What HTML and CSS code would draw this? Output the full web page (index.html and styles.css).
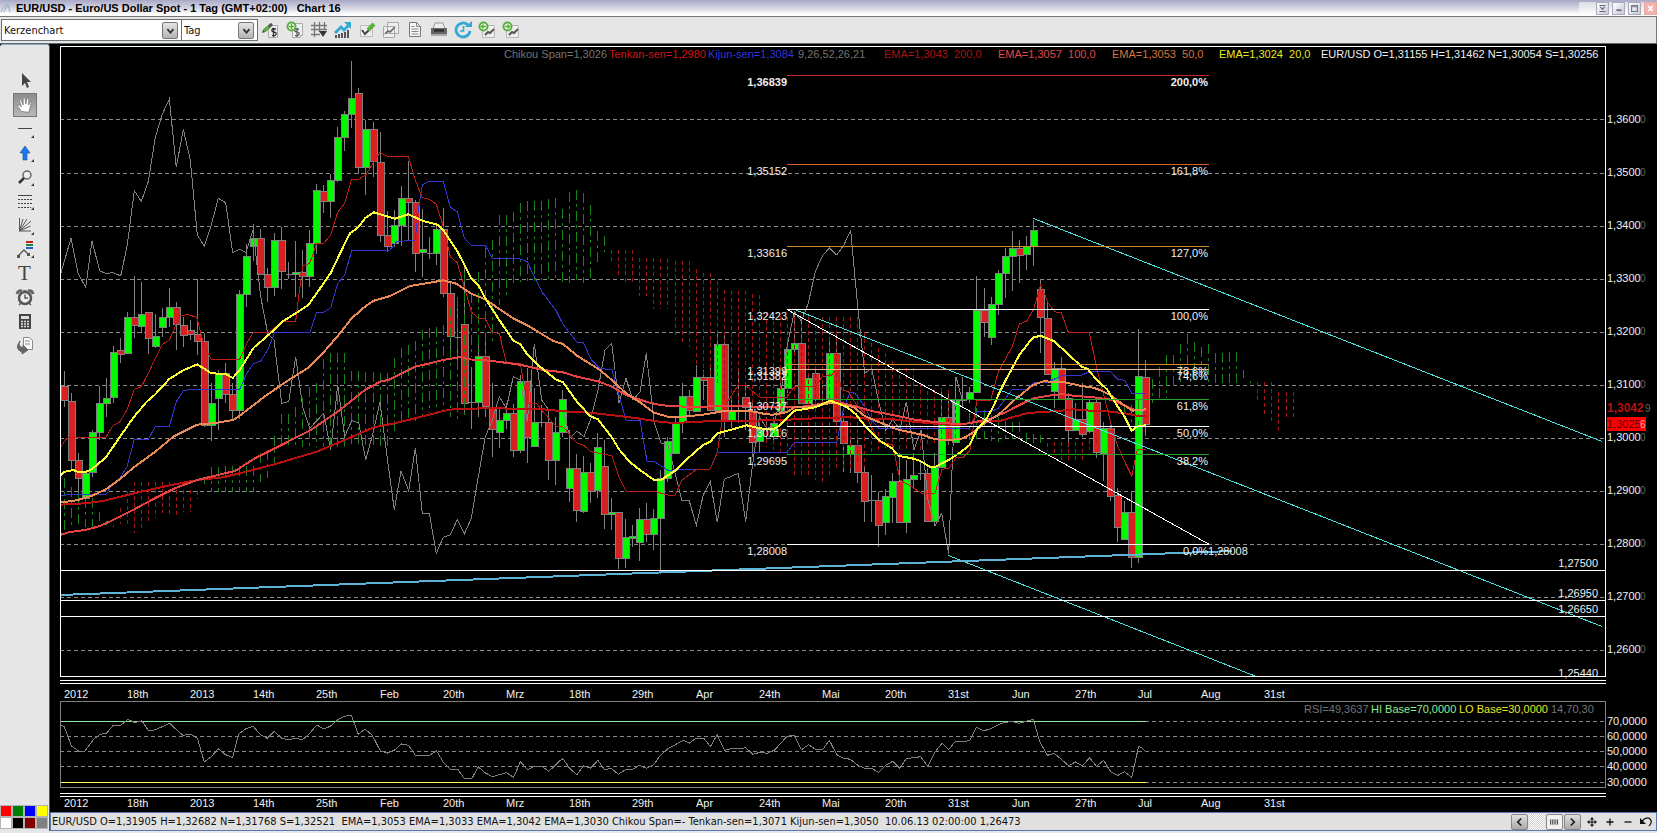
FILE: index.html
```html
<!DOCTYPE html>
<html lang="de">
<head>
<meta charset="utf-8">
<title>EUR/USD - Euro/US Dollar Spot</title>
<link rel="stylesheet" href="styles.css">
</head>
<body>
<header class="titlebar">
  <svg class="logo" viewBox="0 0 12 12"><path d="M1 10 Q3 4 8 2 M4 10 Q5 6 8 4 M8 3 L10 10" fill="none" stroke="#9fb4cc" stroke-width="1.2"/></svg>
  <h1>EUR/USD - Euro/US Dollar Spot - 1 Tag (GMT+02:00) &nbsp; Chart 16</h1>
  <div class="window-buttons">
    <button aria-label="Anheften"><svg viewBox="0 0 13 13"><path d="M3 3h7M3 10h7M4 4.500l2.500 3 2.500-3" fill="none" stroke="#667" stroke-width="1.300"/></svg></button>
    <button aria-label="Minimieren"><svg viewBox="0 0 13 13"><path d="M4 8.500h6" stroke="#667" stroke-width="2"/></svg></button>
    <button aria-label="Maximieren"><svg viewBox="0 0 13 13"><path d="M3 3h7v7H3zM3 4.500h7" fill="none" stroke="#778" stroke-width="1.300"/></svg></button>
    <button class="close" aria-label="Schließen"><svg viewBox="0 0 13 13"><path d="M4 3.500l5 6M9 3.500l-5 6" stroke="#fff" stroke-width="2"/></svg></button>
  </div>
</header>

<div class="toolbar">
  <div class="selects">
    <label class="pick pick-type"><select aria-label="Charttyp"><option>Kerzenchart</option></select><span class="drop"><svg viewBox="0 0 16 17"><path d="M5 7l3.500 4L12 7" fill="none" stroke="#333" stroke-width="2"/></svg></span></label>
    <label class="pick pick-time"><select aria-label="Intervall"><option>Tag</option></select><span class="drop"><svg viewBox="0 0 16 17"><path d="M5 7l3.500 4L12 7" fill="none" stroke="#333" stroke-width="2"/></svg></span></label>
  </div>
  <div class="tools">
    <button aria-label="Instrument bearbeiten"><svg viewBox="0 0 18 18"><path d="M6.500 4.500h9v12h-9z" fill="#eee" stroke="#aaa"/><path d="M14 8.500q-3-2-4 0t2 2.500 2 2.500-4 1M11.500 7v9" fill="none" stroke="#333" stroke-width="1.300"/><path d="M2 10L10 3" stroke="#555" stroke-width="3"/><path d="M2 10l5-4" stroke="#5ab03c" stroke-width="3"/><path d="M0 12l3-1-2-2z" fill="#444"/></svg></button>
    <button aria-label="Instrument hinzufügen"><svg viewBox="0 0 18 18"><path d="M6.500 2.500h10v12h-2v2h-8z" fill="#eee" stroke="#aaa"/><path d="M13 8.500q-3-2-4 0t2 2.500 2 2.500-4 1M11 7v9" fill="none" stroke="#555" stroke-width="1.200"/><circle cx="5.500" cy="5.500" r="4" fill="#fff" stroke="#5ab03c" stroke-width="2"/><path d="M3 5.500h5M5.500 3v5" stroke="#5ab03c" stroke-width="1.600"/></svg></button>
    <button aria-label="Raster"><svg viewBox="0 0 18 18"><path d="M4.500 1v15M9.500 1v10M14.500 1v8M1 4.500h16M1 8.500h16M1 13.500h9" stroke="#777" stroke-width="1.300"/><path d="M9 10h8l-4 6z" fill="#333"/></svg></button>
    <button aria-label="Indikator"><svg viewBox="0 0 18 18"><path d="M2 17v-3M5 17v-4M8 17v-5M11 17v-6M14 17v-8" stroke="#555" stroke-width="2"/><path d="M1 12L7 6l3 3 5-5" fill="none" stroke="#35a8d4" stroke-width="3"/><path d="M10 1h7v7z" fill="#35a8d4"/></svg></button>
    <button aria-label="Zeichnen"><svg viewBox="0 0 18 18"><path d="M2.500 4.500h12v11h-12z" fill="#eee" stroke="#bbb"/><path d="M4 9l3 4 9-9" fill="none" stroke="#444" stroke-width="2"/><path d="M10 9l6-6" stroke="#5ab03c" stroke-width="4"/></svg></button>
    <button aria-label="Chart kopieren"><svg viewBox="0 0 18 18"><path d="M5.500 1.500h11v11h-11zM1.500 5.500h11v11h-11z" fill="#eee" stroke="#aaa"/><path d="M3 13l3-3 2 1 5-5" fill="none" stroke="#666" stroke-width="1.600"/></svg></button>
    <button aria-label="Dokumente"><svg viewBox="0 0 18 18"><path d="M3.500 1.500h7l4 4v10h-11z" fill="#f6f6f6" stroke="#777"/><path d="M10.500 1.500v4h4M5.500 5.500h3M5.500 8h7M5.500 10.500h7M5.500 13h7" fill="none" stroke="#888"/></svg></button>
    <button aria-label="Drucken"><svg viewBox="0 0 18 18"><path d="M5 2h8l2 6H3z" fill="#eee" stroke="#999"/><path d="M1 7h16v6H1z" fill="#666"/><path d="M1 13h16v2H1z" fill="#aaa"/><path d="M4 9.500h10" stroke="#222" stroke-width="2"/></svg></button>
    <button aria-label="Aktualisieren"><svg viewBox="0 0 18 18"><path d="M14 4a7 7 0 1 0 2 6" fill="none" stroke="#35a8d4" stroke-width="2.800"/><path d="M11 6h7V0z" fill="#35a8d4"/><path d="M9.500 5v5H6" fill="none" stroke="#35a8d4" stroke-width="1.600"/></svg></button>
    <button aria-label="Chart zurück"><svg viewBox="0 0 18 18"><path d="M4.500 4.500h12v12h-12z" fill="#eee" stroke="#bbb"/><path d="M7 14l3-3 2 1 4-4" fill="none" stroke="#555" stroke-width="2"/><circle cx="5.500" cy="5.500" r="4" fill="#fff" stroke="#5ab03c" stroke-width="2"/><path d="M3 5.500h5M5.500 3.500l-2 2 2 2" fill="none" stroke="#5ab03c" stroke-width="1.400"/></svg></button>
    <button aria-label="Chart vor"><svg viewBox="0 0 18 18"><path d="M4.500 4.500h12v12h-12z" fill="#eee" stroke="#bbb"/><path d="M7 14l3-3 2 1 4-4" fill="none" stroke="#555" stroke-width="2"/><circle cx="5.500" cy="5.500" r="4" fill="#fff" stroke="#5ab03c" stroke-width="2"/><path d="M3 5.500h5M5.500 3.500l2 2-2 2" fill="none" stroke="#5ab03c" stroke-width="1.400"/></svg></button>
  </div>
</div>

<main class="workspace">
  <aside class="side">
    <nav class="side-tools">
      <button aria-label="Auswahl"><svg viewBox="0 0 24 24"><path d="M9 4v13l3-3 2 5 2-1-2-5h4z" fill="#444"/></svg></button>
      <button class="active" aria-label="Hand"><svg viewBox="0 0 24 24"><path d="M8 19l-4-6q0-2 2-1l2 2-2-7q1-2 2 0l2 5V5q1-2 2 0l1 6 1-6q1-1 2 0v7l2-4q2-1 1 1l-2 8-1 3z" fill="#fff" stroke="#666" stroke-width=".7"/></svg></button>
      <button aria-label="Linie"><svg viewBox="0 0 24 24"><path d="M5 11.500h14" stroke="#444"/><path d="M21 18v3h-3z" fill="#333"/></svg></button>
      <button aria-label="Pfeil"><svg viewBox="0 0 24 24"><path d="M12 5l5 7h-3v7h-4v-7H7z" fill="#1c78e8" stroke="#0b50b0" stroke-width=".6"/><path d="M21 18v3h-3z" fill="#333"/></svg></button>
      <button aria-label="Lupe"><svg viewBox="0 0 24 24"><circle cx="14" cy="10" r="4" fill="#e8eef2" stroke="#666" stroke-width="1.500"/><path d="M11 13l-5 5" stroke="#333" stroke-width="2.500"/><path d="M21 18v3h-3z" fill="#333"/></svg></button>
      <button aria-label="Fibonacci"><svg viewBox="0 0 24 24"><path d="M5 6.500h14" stroke="#444"/><path d="M5 10.500h14M5 14.500h14M5 18.500h13" stroke="#444" stroke-dasharray="2 1"/><path d="M21 18v3h-3z" fill="#333"/></svg></button>
      <button aria-label="Fächer"><svg viewBox="0 0 24 24"><path d="M6.500 5v13H18M6.500 18L10 6M6.500 18L14 6M6.500 18L18 8M6.500 18l11-5" fill="none" stroke="#555"/><path d="M21 19v3h-3z" fill="#333"/></svg></button>
      <button aria-label="Trend"><svg viewBox="0 0 24 24"><path d="M13 5h7" stroke="#c02020" stroke-width="2"/><path d="M13 8h7" stroke="#208040" stroke-width="2"/><path d="M13 11h7" stroke="#2060c0" stroke-width="2"/><path d="M5 19l6-6 5 5" fill="none" stroke="#555" stroke-width="1.300"/><path d="M4 18h3v3H4zM14 16h3v3h-3z" fill="#555"/><path d="M21 18v3h-3z" fill="#333"/></svg></button>
      <button class="letter" aria-label="Text">T</button>
      <button aria-label="Alarm"><svg viewBox="0 0 24 24"><circle cx="12" cy="13" r="6" fill="#eee" stroke="#555" stroke-width="2.500"/><path d="M4 9q1-4 5-3M20 9q-1-4-5-3" fill="none" stroke="#666" stroke-width="3"/><path d="M12 9.500V13h3M8 18l-2 2M16 18l2 2M10 6h4" fill="none" stroke="#555" stroke-width="1.400"/></svg></button>
      <button aria-label="Rechner"><svg viewBox="0 0 24 24"><path d="M6 5h12v15H6z" fill="#444"/><path d="M8 7h8v3H8z" fill="#ddd"/><path d="M8 12.500h8M8 15h8M8 17.500h8" stroke="#ddd" stroke-width="1.500" stroke-dasharray="2 1"/></svg></button>
      <button aria-label="Vorlage"><svg viewBox="0 0 24 24"><path d="M10.500 4.500h6l3 3v9h-9z" fill="#fafafa" stroke="#888"/><path d="M12 8h5M12 11h5" stroke="#888"/><path d="M7 8q-3 5 3 7v-3l5 5-6 4v-2Q1 16 7 8z" fill="#666" stroke="#666"/></svg></button>
    </nav>
    <div class="palette">
      <button class="c-red" aria-label="Rot"></button><button class="c-green" aria-label="Grün"></button><button class="c-blue" aria-label="Blau"></button><button class="c-yellow" aria-label="Gelb"></button>
      <button class="c-white" aria-label="Weiß"></button><button class="c-black" aria-label="Schwarz"></button><button class="c-maroon" aria-label="Braun"></button><button class="c-gray" aria-label="Grau"></button>
    </div>
  </aside>

  <section class="content">
    <svg class="chart" id="chart" viewBox="50 44 1607 768" preserveAspectRatio="xMinYMin meet" role="img" aria-label="EUR/USD Kerzenchart mit RSI"></svg>
    <footer class="status">
      <span class="readout">EUR/USD O=1,31905 H=1,32682 N=1,31768 S=1,32521 &nbsp;EMA=1,3053 EMA=1,3033 EMA=1,3042 EMA=1,3030 Chikou Span=- Tenkan-sen=1,3071 Kijun-sen=1,3050 &nbsp;10.06.13 02:00:00 1,26473</span>
      <div class="scroller">
        <button class="raised" aria-label="Zurück"><svg viewBox="0 0 16 16"><path d="M10 4L6 8l4 4" fill="none" stroke="#222" stroke-width="2"/></svg></button>
        <span class="track"></span>
        <button class="thumb" aria-label="Position"><svg viewBox="0 0 16 16"><path d="M3.500 5v6M5.500 5v6M7.500 5v6M9.500 5v6M11.500 5v6" stroke="#333"/></svg></button>
        <button class="raised" aria-label="Weiter"><svg viewBox="0 0 16 16"><path d="M6 4l4 4-4 4" fill="none" stroke="#222" stroke-width="2"/></svg></button>
      </div>
      <div class="zoomers">
        <button aria-label="Verschieben"><svg viewBox="0 0 16 16"><path d="M8 4v8M4 8h8" stroke="#111"/><path d="M8 3l2 2.500H6zM8 13l2-2.500H6zM3 8l2.500-2v4zM13 8l-2.500-2v4z" fill="#111"/></svg></button>
        <button aria-label="Vergrößern"><svg viewBox="0 0 16 16"><path d="M8 4.500v7M4.500 8h7" stroke="#111" stroke-width="1.300"/></svg></button>
        <button aria-label="Verkleinern"><svg viewBox="0 0 16 16"><path d="M4.500 8h7" stroke="#111" stroke-width="1.300"/></svg></button>
        <button aria-label="Rückgängig"><svg viewBox="0 0 16 16"><path d="M4 7q5-5 8-2 3 3-1 7" fill="none" stroke="#111" stroke-width="1.200"/><path d="M2 4v6h6z" fill="#111"/></svg></button>
      </div>
    </footer>
  </section>
</main>
<script src="chart.js"></script>
</body>
</html>
```
FILE: styles.css
```css
* { box-sizing: border-box; }
html, body { height: 100%; }
body {
  margin: 0;
  padding-bottom: 2px;
  display: flex;
  flex-direction: column;
  overflow: hidden;
  background: #e6e6ee;
  font: 11px "DejaVu Sans Condensed", "Liberation Sans", sans-serif;
  color: #111;
}
button { padding: 0; border: 0; background: none; font: inherit; color: inherit; }
button svg { display: block; width: 100%; height: 100%; }

.titlebar {
  flex: none;
  height: 17px;
  display: flex;
  align-items: center;
  gap: 4px;
  background: linear-gradient(#a9a9c6, #d4d4e2 50%, #fff 90%);
  border-bottom: 1px solid #70777a;
}
.logo { width: 12px; height: 12px; }
.titlebar h1 {
  flex: 1;
  margin: 0;
  font: bold 11px/14px "Liberation Sans", Arial, sans-serif;
  color: #000;
  white-space: nowrap;
}
.window-buttons { display: flex; gap: 3px; padding-left: 17px; background: linear-gradient(#dcdce6, #fff); }
.window-buttons button {
  width: 13px;
  height: 13px;
  border: 1px solid #aab;
  background: linear-gradient(135deg, #fff, #c8c8d8);
}
.window-buttons .close { border-color: #e9a9a4; background: #f0b4ae; }

.toolbar {
  flex: none;
  height: 27px;
  display: flex;
  align-items: center;
  gap: 4px;
  padding-left: 1px;
  background: #e6e6e6;
  border-bottom: 1px solid #5f686a;
  border-right: 1px solid #777;
}
.selects { display: flex; height: 22px; border: 1px solid #6c7274; background: #fff; }
.pick { display: flex; align-items: center; padding-right: 3px; }
.pick-type { width: 179px; }
.pick-time { width: 76px; border-left: 1px solid #6c7274; }
.pick select {
  flex: 1;
  min-width: 0;
  height: 20px;
  padding: 0 2px;
  border: 0;
  appearance: none;
  background: #fff;
  font: inherit;
  color: #111;
}
.drop {
  width: 16px;
  height: 17px;
  border: 1px solid #777;
  border-radius: 2px;
  background: linear-gradient(#e4e4e4, #b4b4b4);
}
.drop svg { display: block; width: 100%; height: 100%; }
.tools { display: flex; gap: 6px; }
.tools button { width: 18px; height: 18px; }

.workspace { flex: 1; min-height: 0; display: flex; background: #000; }
.side {
  flex: none;
  width: 50px;
  display: flex;
  flex-direction: column;
  justify-content: space-between;
  background: #e6e6e6;
  border-right: 1px solid #3c5c98;
  border-top: 1px solid #8aa4cc;
  border-radius: 3px 3px 0 0;
}
.side-tools { display: flex; flex-direction: column; align-items: center; padding-top: 24px; }
.side-tools button { width: 24px; height: 24px; }
.side-tools .active {
  border: 1px solid #777;
  background: linear-gradient(#8c8c8c, #b8b8b8);
}
.side-tools .letter { font: 21px/24px "Liberation Serif", serif; color: #444; }
.palette {
  display: grid;
  grid-template-columns: repeat(4, 10px);
  gap: 2px;
  padding: 0 0 3px 1px;
}
.palette button { height: 10px; outline: 1px solid #b4b4b4; }
.c-red { background: #f00; }
.c-green { background: #008000; }
.c-blue { background: #00f; }
.c-yellow { background: #ff0; }
.c-white { background: #fff; }
.c-black { background: #000; }
.c-maroon { background: #800000; }
.c-gray { background: #808080; }

.content { flex: 1; min-width: 0; display: flex; flex-direction: column; background: #000; }
.chart { flex: 1; min-height: 0; width: 100%; display: block; }
.status {
  flex: none;
  height: 19px;
  display: flex;
  align-items: center;
  padding: 0 2px 0 1px;
  background: #e0e0e0;
  border: 1px solid #5878b0;
}
.readout { flex: 1; white-space: nowrap; }
.scroller { display: flex; gap: 1px; margin-right: 3px; }
.scroller button { width: 17px; height: 16px; border: 1px solid #888; border-radius: 2px; }
.raised { background: linear-gradient(#e0e0e0, #aaa); }
.thumb { background: #f2f2f2; }
.track {
  width: 16px;
  background: repeating-conic-gradient(#fff 0 25%, #d0d0d0 0 50%) 0 0 / 2px 2px;
}
.zoomers { display: flex; gap: 2px; }
.zoomers button { width: 16px; height: 16px; }

.chart text { font: 11px "Liberation Sans", Arial, sans-serif; fill: #f0f0f0; white-space: pre; }
.chart .small { font-size: 10px; fill: #666; }
.chart .end { text-anchor: end; }
.chart .bold { font-weight: bold; }
.chart .gray { fill: #747474; }
.chart .tenkan { fill: #d01414; }
.chart .kijun { fill: #3434d8; }
.chart .ema200 { fill: #a81414; }
.chart .ema100 { fill: #e24848; }
.chart .ema50 { fill: #d8743c; }
.chart .ema20 { fill: #e8e820; }
.chart .hi { fill: #90ee90; }
.chart .last { font-size: 12px; fill: #b81010; }
.chart .tagged { fill: #5c0000; }
.chart .tagend { font-size: 10px; fill: #ffa0a0; }
.line { fill: none; shape-rendering: crispEdges; }
.l-gray { stroke: #808080; }
.l-tenkan { stroke: #c01c18; }
.l-kijun { stroke: #3636d0; }
.l-ema20 { stroke: #ffff38; stroke-width: 2; }
.l-ema50 { stroke: #ee8a55; stroke-width: 2; }
.l-ema100 { stroke: #e84444; stroke-width: 2; }
.l-ema200 { stroke: #bb1010; stroke-width: 2; }
.l-white { stroke: #fff; }
.l-cyan { stroke: #4ce0dc; }
.l-trend { stroke: #5cb4d8; stroke-width: 2; }
.l-hi { stroke: #90ee90; }
.l-lo { stroke: #ffff50; }
.l-red { stroke: #c82424; }
.l-rust { stroke: #d4602c; }
.l-orange { stroke: #d48a30; }
.l-sand { stroke: #e8b888; }
.l-green { stroke: #24a024; }
.grid { stroke: #8a8a8a; stroke-dasharray: 4 3; }
.wick { stroke: #808080; }
.up { fill: #00fa00; stroke: #808080; }
.down { fill: #d82020; stroke: #808080; }
.cloud-up { stroke: #188418; stroke-dasharray: 10 4 3 4; }
.cloud-down { stroke: #a41616; stroke-dasharray: 4 3; }
.box { fill: none; stroke: #fff; }
.box-gray { fill: none; stroke: #808080; }
.tag { fill: #f00; }
```
FILE: chart.js
```js
const svg = document.getElementById('chart');
const NS = 'http://www.w3.org/2000/svg';

function add(name, attrs, text) {
  const el = document.createElementNS(NS, name);
  for (const k in attrs) el.setAttribute(k, attrs[k]);
  if (text !== undefined) el.textContent = text;
  svg.appendChild(el);
  return el;
}
const line = (cls, x1, y1, x2, y2) => add('line', { class: 'line ' + cls, x1, y1, x2, y2 });
const label = (cls, x, y, t) => add('text', { class: cls, x, y }, t);

/* Series are stored in sections: origin, then x,y pairs in subdivided units. */
const section = (ox, oy, kx = 3) => s => s.trim().split(/\s+/).map(p => {
  const [x, y] = p.split(',').map(Number);
  return [ox + x / kx, oy + y / 3];
});
const A = section(50, 50), B = section(440, 170), C = section(740, 220), D = section(1000, 200);
const series = (cls, ...parts) =>
  add('polyline', { class: 'line ' + cls, points: parts.flat().map(p => p.map(v => v.toFixed(1)).join()).join(' ') });
const barX = i => Math.round(64 + 7.023 * i - 0.5) + 0.5;

/* Horizontal grid */
for (let i = 0; i <= 10; i++) line('grid', 60, i ? 120.5 + 53 * i : 119.5, 1605, i ? 120.5 + 53 * i : 119.5);

/* Candles: direction high top bottom low */
const candles = [
  [50, `d963,1009,1052,1070 d1030,1052,1228,1262 d1210,1229,1282,1350 u1262,1268,1343,1343 u1140,1147,1268,1280 u1007,1060,1147,1170
  u985,1045,1060,1100 u888,907,1043,1060 d865,899,910,938 u787,802,910,910 d677,802,826,865 u695,791,826,850 d787,787,865,913
  u793,859,890,895 u775,802,832,862 u713,772,802,832 d757,772,822,900 d800,826,856,892 d811,841,852,870 d688,853,874,916
  d850,874,1126,1130 u1000,1060,1126,1172 u960,970,1046,1139 d940,970,1033,1060 d1000,1033,1082,1106 u720,733,1081,1106
  u583,619,733,770 u522,565,590,632 d537,565,673,673 d655,673,712,757 u550,571,712,737 d532,571,664,718 u637,673,673,688
  u574,667,673,740 d600,667,679,745 u541,580,679,710 u402,421,580,612 d405,424,455,490 u373,391,455,505 u232,262,391,397
  u184,193,262,304 u33,145,193,234 d115,130,352,373 u210,238,352,436 d215,238,334,380 d246,337,556,577 d484,556,590,605
  u480,526,580,590 u408,445,526,587 d334,445,457,570 d450,457,610,665 u478,598,607,680 u561,611,611,628 u525,538,610,645
  d474,538,730,742 d700,730,859,900 u775,861,861,940 d640,823,1060,1090`],
  [170, `u590,697,697,778 u500,559,697,740 d500,559,710,740 d640,710,776,860 u712,751,788,833 u700,730,751,776 d702,730,842,860
  u615,634,842,850 d595,634,802,878 u655,755,826,832 u706,756,756,770 d720,757,872,930 u740,787,872,946 u660,688,787,800
  u780,895,956,995 d853,895,1021,1055 u857,905,1021,1028 d880,905,962,998 u790,832,962,985 d810,889,1034,1078 u985,1027,1033,1080
  d1025,1027,1165,1198 u1048,1102,1165,1195 u1065,1097,1103,1130 u1013,1048,1117,1172 d998,1048,1093,1117 u1018,1045,1093,1141
  u900,925,1045,1213 u800,814,925,935 u740,760,850,850 u640,679,757,790 d660,679,722,740 u585,622,724,726 d600,622,632,690
  d595,622,721,722 u484,523,721,724 d485,523,750,800 u690,724,750,775 u605,722,722,760 d640,682,712,780 d700,722,815,860
  u740,781,815,850 u740,775,775,820 u740,760,800,815 u630,655,725,730`],
  [220, `u370,388,506,520 u272,370,388,400 d300,370,550,552 u460,475,550,560 d450,460,538,545 u495,538,538,545 u350,400,535,545
  d335,400,604,610 d580,604,670,755 u660,676,703,760 d650,676,757,790 d740,757,844,905 u765,842,842,905 d815,841,916,980
  u808,829,907,944 u760,784,832,910 d700,784,907,910 u720,778,907,940 u700,766,778,808 u725,760,760,780 d745,760,904,905
  u700,742,904,905 u505,590,739,745 d520,590,658,675 u470,541,667,670 u470,541,541,560 u500,517,538,550 u168,271,517,520
  d205,271,308,350 u230,253,352,375 u150,160,253,285 u85,109,160,235 u33,85,109,213 d60,85,106,188 u48,79,103,150 u0,31,79,138`],
  [200, `d238,268,352,460 d310,355,523,525 u485,503,571,624 d470,503,595,600 d580,595,691,740 u610,658,691,693 d550,658,703,710
  u600,607,694,700 d590,607,757,775 u665,683,757,842 d675,683,886,902 d865,886,982,1025 u902,937,1018,1020 d875,937,1072,1105
  u388,529,1072,1090 d480,532,674,708`]
];
let bar = 0;
for (const [oy, text] of candles) {
  for (const c of text.trim().split(/\s+/)) {
    const [h, t, b, l] = c.slice(1).split(',').map(v => oy + v / 3);
    const x = barX(bar++);
    line('wick', x, h, x, l);
    if (b - t < 1) line('wick', x - 3, t, x + 4, t);
    else {
      const y = Math.round(t) + 0.5;
      add('rect', { class: (c[0] === 'u' ? 'up' : 'down'), 'shape-rendering': 'crispEdges', x: x - 3, y, width: 7, height: Math.max(1, Math.round(b - t)) });
    }
  }
}

/* Cloud boundaries: origin, class, then x,upper,lower */
const clouds = [
  [50, 50, 'up', '42,1285,1455 63,1310,1435 84,1330,1425 105,1345,1430 126,1345,1435 147,1385,1412 168,1412,1425'],
  [50, 50, 'down', '190,1425,1432 210,1375,1422 231,1327,1425 253,1297,1448 274,1297,1435 316,1297,1405 337,1297,1390 358,1297,1395 379,1320,1405 400,1320,1385 421,1320,1385 442,1322,1347'],
  [50, 50, 'up', '463,1280,1302 484,1250,1325 611,1248,1325 632,1210,1297 653,1200,1285 674,1158,1245 695,1092,1190 716,1092,1190 737,1070,1190 758,1045,1190 779,1010,1190 800,1000,1190 821,928,1190 842,908,1190 884,908,1190 905,963,1190 1011,970,1190 1032,925,1145 1053,895,1115 1096,873,1115 1117,838,1100 1159,830,1080 1180,825,1080 1201,770,1100 1222,740,1115 1243,665,1105'],
  [440, 170, 'up', '94,370,560 115,305,555 136,235,560 157,210,525 178,135,405 199,135,375 220,125,340 241,100,335 262,93,335 305,93,330 347,83,325 368,118,340 390,62,340 411,60,330 432,70,340 453,105,330 474,186,285 495,198,245'],
  [440, 170, 'down', '516,240,278 537,240,320 558,240,335 579,240,338 600,263,378 621,263,378 642,265,417 684,267,417 705,272,495 726,272,515 747,272,532 768,297,590 789,310,625 811,310,625 832,335,640 853,362,690 916,362,725 937,372,740 958,375,760 979,430,830 1042,440,860 1063,440,915 1147,440,935 1168,440,915 1190,440,900'],
  [740, 220, 'down', '311,290,750 332,290,750 353,290,735 374,335,740 395,370,700 437,400,690 480,445,690 522,445,690 543,490,690 564,513,680 606,505,670 649,515,660'],
  [740, 220, 'up', '691,580,660 716,560,660 737,572,655 758,590,665 779,590,665 800,607,660 838,605,655 859,640,668 901,645,668'],
  [1000, 200, 'down', '142,728,752 163,726,770 184,726,780 247,726,780 268,720,750 290,718,735'],
  [1000, 200, 'up', '374,620,640 395,615,670 416,600,680 437,570,640 458,535,610 480,500,600 500,465,595 520,465,570 541,432,550 562,402,540 583,425,540 604,440,545 625,432,550 646,460,550 709,455,548 730,510,535 751,543,548'],
  [1000, 200, 'down', '772,545,600 793,545,645 814,545,662 835,575,695 856,577,660 878,577,657']
];
for (const [ox, oy, cls, text] of clouds) {
  const pts = text.split(' ').map(s => s.split(',').map(Number));
  for (let i = 0; i < 180; i++) {
    const x = (64 + 7.023 * i - ox) * 3;
    const n = pts.findIndex(p => p[0] + 7 >= x);
    if (n < 0 || x < pts[0][0] - 7) continue;
    const q = pts[n], p = pts[Math.max(0, n - 1)];
    const f = p === q ? 0 : Math.min(1, (x - p[0]) / (q[0] - p[0]));
    const v = k => oy + (p[k] + (q[k] - p[k]) * f) / 3;
    line('cloud-' + cls, barX(i), v(1), barX(i), v(2));
  }
}

/* Chikou span */
series('l-gray',
  A(`33,668 63,565 84,670 107,712 126,572 149,663 168,670 190,668 212,678 232,585 253,422 274,454 295,395 316,262 337,193 358,147 379,352 400,238 421,330
  442,555 463,588 484,525 505,445 527,458 548,608 569,598 588,607 609,540 632,740 653,850 672,870 695,1060 716,1055 737,920 758,1070 779,1135 821,1090
  842,1200 863,1005 884,1160 905,1112 926,1118 947,1230 969,1150 990,1055 1012,1225 1033,1380 1053,1263 1076,1322 1096,1193 1117,1390 1138,1390 1159,1510`),
  B(`10,1102 31,1095 52,1048 73,1092 94,1045 115,920 136,800 157,750 178,680 199,715 220,620 241,630 262,755 283,522 305,690 326,720 369,720 390,805
  411,783 432,800 453,745 474,660 495,540 515,520 537,700 558,625 579,690 600,665 619,550 642,755 663,820 684,825 705,910 726,993 747,990 769,1066
  790,975 811,935 832,1057 853,928 895,910 917,1055`),
  C(`37,740 58,590 80,625 100,620 120,540 141,380 163,275 184,303 205,250 226,155 247,108 268,84 290,105 311,76 332,31 353,260 374,460 395,445 416,545
  437,630 458,598 480,630 499,545 522,690 543,630 564,840 585,918 605,880 626,1003 634,800 648,470 668,545`));

/* Kijun-sen */
series('l-kijun',
  A(`33,1338 60,1333 168,1333 189,1300 210,1285 231,1250 253,1168 295,1168 316,1130 358,1130 379,1055 400,1022 420,1018 569,1018 590,970 611,940 632,933
  653,900 674,848 779,848 800,787 821,787 842,773 863,700 884,675 905,602 1018,602 1040,575 1096,570 1105,480 1117,405 1138,394 1180,394`),
  B(`10,34 31,112 52,125 73,205 94,226 136,226 157,265 241,267 262,275 283,320 305,365 326,392 347,420 369,463 411,517 430,517 453,568 480,595 516,600
  537,675 558,751 600,751 621,874 642,874 684,901 811,897 832,847 1042,847 1063,817 1190,817`),
  C(`310,570 330,517 345,520 374,560 395,600 416,625 688,625 712,575 752,575 775,565 817,508 860,508 880,488 922,487 964,468 1027,465 1048,455`),
  D(`331,514 352,537 374,541 395,580 437,580`));

/* Tenkan-sen */
series('l-tenkan',
  A(`33,1190 48,1168 60,1161 168,1161 189,1127 210,1115 231,1080 253,1018 274,1010 295,970 316,925 337,883 358,870 372,840 385,797 415,794 440,802 450,840
  463,890 484,928 569,928 590,880 609,848 655,848 700,813 737,813 745,750 758,648 779,640 800,580 821,580 842,555 863,487 884,460 905,387 926,387
  947,375 969,340 990,307 1012,319 1075,319 1096,390 1117,443 1138,448 1159,463 1180,530`),
  B(`31,260 52,278 73,350 94,425 115,445 136,447 157,487 178,490 199,578 241,580 262,700 290,700 305,720 326,745 347,768 369,770 411,820 430,825 453,845
  516,857 537,920 558,964 642,964 684,975 705,975 726,930 768,900 811,897 832,848 853,710 895,645 916,645 958,681 1040,682 1063,650 1105,650`),
  C(`226,500 247,470 275,465 290,440 305,510 325,515 350,555 374,580 416,665 458,675 480,780 510,797 545,820 585,820 606,748 627,745 648,713 670,712
  691,690 710,541 752,541 775,455 817,380 838,312 860,303 880,270 902,195 925,250 943,275 964,278 985,337 1048,337`),
  D(`289,500 315,600 335,680 352,735 374,785 395,828 412,748 437,748`));

/* Moving averages */
series('l-ema200',
  A(`30,1364 105,1360 160,1353 253,1330 350,1308 442,1290 520,1282 600,1262 674,1243 800,1205 884,1170 971,1132 1035,1120 1096,1105 1180,1083 1210,1078`),
  B(`50,718 150,714 210,716 300,717 369,724 450,728 537,738 600,746 663,756 705,759 800,754 937,752 1042,749 1130,745`),
  C(`268,595 320,591 395,597 458,598 530,606 606,613 650,616 700,607 780,603 817,592 860,580 912,575 950,574 1000,568`),
  D(`270,632 310,632 374,640 415,648 437,648`));
series('l-ema100',
  A(`30,1455 60,1446 105,1440 147,1429 190,1410 253,1378 316,1344 379,1313 442,1290 500,1276 555,1263 611,1227 684,1190 779,1142 863,1085 945,1020
  990,995 1018,989 1096,950 1180,930 1230,921`),
  B(`85,568 150,572 240,584 305,599 369,607 411,620 474,634 516,650 558,675 621,696 663,706 750,711 853,708 920,709 979,712 1063,712 1105,708`),
  C(`268,547 310,550 350,560 395,573 458,585 525,599 606,609 670,613 710,605 750,597 800,575 838,555 880,535 925,527 965,522 1005,528 1055,531`),
  D(`300,595 340,600 380,620 405,630 437,630`));
series('l-ema50',
  A(`30,1358 84,1350 126,1337 168,1318 210,1287 253,1251 316,1205 370,1160 442,1124 500,1118 550,1110 569,1097 650,1035 716,990 774,954 820,908 863,858
  905,805 947,768 971,752 1018,739 1080,708 1140,698 1180,691 1215,700`),
  B(`52,343 94,371 136,388 178,417 220,445 262,466 340,513 369,522 411,557 474,596 516,630 558,670 600,697 642,728 684,740 720,741 789,734 853,723
  937,724 979,733 1000,734 1042,726 1063,712 1105,711`),
  C(`268,550 290,550 340,561 374,588 416,606 470,628 550,645 585,658 625,661 670,655 700,637 737,607 775,585 817,545 880,494 910,484 975,487 1020,497 1060,503`),
  D(`300,570 331,585 374,617 398,632 437,628`));
series('l-ema20',
  A(`30,1277 42,1266 70,1260 84,1266 105,1267 126,1257 168,1222 210,1160 250,1103 290,1055 316,1033 358,987 400,961 442,943 484,970 527,972 548,984
  569,960 611,893 653,857 700,813 737,790 775,765 800,730 842,669 880,590 900,550 925,532 945,505 971,487 1000,496 1035,506 1075,493 1117,512 1165,525`),
  B(`10,180 52,243 94,325 115,345 136,385 178,450 220,512 240,522 262,553 300,590 347,628 369,637 411,695 450,738 474,748 516,803 537,838 570,877
  600,900 642,930 663,930 705,902 747,862 789,825 811,815 832,790 874,779 920,766 958,775 1000,778 1020,766 1063,722`),
  C(`226,562 270,542 290,549 320,561 348,583 374,617 416,660 456,685 475,707 525,717 545,725 570,741 585,741 627,719 660,698 688,676 712,627 737,600
  760,560 779,516 800,475 838,405 878,353 902,347 943,364 985,403 1025,440 1043,447 1070,480`),
  D(`321,568 352,618 374,650 395,692 412,680 437,676`));

/* Trend lines */
line('l-white', 787, 309.5, 1208.5, 544);
line('l-cyan', 794.5, 309.5, 1602, 626.5);
line('l-cyan', 1033.5, 218.5, 1602, 441.5);
line('l-cyan', 948.5, 555.5, 1255, 676);
line('l-trend', 60, 595, 1232, 551);

/* Retracement levels */
const fibs = [
  ['l-red', 75.5, '1,36839', '200,0%'], ['l-rust', 164.5, '1,35152', '161,8%'], ['l-orange', 246.5, '1,33616', '127,0%'],
  ['l-white', 309.5, '1,32423', '100,0%'], ['l-orange', 364.5, '1,31399', '78,6%'], ['l-sand', 369.5, '1,31382', '74,6%'],
  ['l-green', 399.5, '1,30737', '61,8%'], ['l-white', 426.5, '1,30216', '50,0%'], ['l-green', 454.5, '1,29695', '38,2%'],
  ['l-white', 544.5, '1,28008', '']
];
fibs.forEach(([cls, y, price, pct], i) => {
  const face = i ? 'end' : 'end bold';
  line(cls, 787, y, 1209, y);
  label(face, 787, y + 10.5, price);
  if (pct) label(face, 1208, y + 10.5, pct);
});
label('', 1183, 555, '0,0%1,28008');

/* Support levels */
for (const [y, t] of [[570.5, '1,27500'], [600.5, '1,26950'], [616.5, '1,26650'], [676.5, '1,25440']]) {
  line('l-white', 60, y, 1605, y);
  label('end', 1598, y === 676.5 ? 677 : y - 3.5, t);
}

/* Frames */
add('rect', { class: 'box line', x: 60.5, y: 46.5, width: 1545, height: 630 });
for (const y of [680.5, 683.5, 793.5, 796.5]) line('l-white', 60, y, 1606, y);
add('rect', { class: 'box-gray line', x: 60.5, y: 701.5, width: 1545, height: 86 });

/* Price axis */
for (let i = 0; i <= 10; i++) {
  label('', 1607, 123 + 53 * i, '1,' + (3600 - 100 * i));
  label('small', 1640, 123 + 53 * i, '0');
}
label('last bold', 1607, 412, '1,3042');
label('small', 1645, 412, '9');
add('rect', { class: 'tag', x: 1607, y: 417, width: 39, height: 14 });
label('tagged', 1607, 428, '1,3025');
label('tagend', 1640, 428, '6');

/* Legend */
for (const [cls, x, t] of [
  ['gray', 504, 'Chikou Span=1,3026'], ['tenkan', 609, 'Tenkan-sen=1,2980'], ['kijun', 708, 'Kijun-sen=1,3084'], ['gray', 798, '9,26,52,26,21'],
  ['ema200', 884, 'EMA=1,3043  200,0'], ['ema100', 998, 'EMA=1,3057  100,0'], ['ema50', 1112, 'EMA=1,3053  50,0'], ['ema20', 1219, 'EMA=1,3024  20,0'],
  ['', 1321, 'EUR/USD O=1,31155 H=1,31462 N=1,30054 S=1,30256']
]) label(cls, x, 58, t);

/* Date axes */
const dates = ['2012', '18th', '2013', '14th', '25th', 'Feb', '20th', 'Mrz', '18th', '29th', 'Apr', '24th', 'Mai', '20th', '31st', 'Jun', '27th', 'Jul', 'Aug', '31st'];
dates.forEach((d, i) => {
  const x = Math.round(63.5 + 63.2 * i);
  label('', x, 698, d);
  label('', x, 807, d);
});

/* RSI panel */
for (const y of [721.5, 736.5, 751.5, 766.5, 782.5]) line('grid', 60, y, 1605, y);
line('l-hi', 61, 721.5, 1146, 721.5);
line('l-lo', 61, 782.5, 1146, 782.5);
series('l-gray',
  section(0, 680, 2.8)(`172,135 180,140 200,198 220,213 238,213 262,178 280,163 298,160 317,136 338,136 358,118 378,128 397,122 416,152 436,149 475,130 495,150
  512,166 534,163 553,175 572,246 592,230 611,206 630,223 651,233 668,163 687,147 709,139 728,163 748,175 768,154 789,175 808,179 828,175 847,179
  865,163 887,135 907,147 926,138 945,120 963,109 984,106 1003,163 1022,148 1042,165 1065,213 1085,219 1105,210 1124,192 1144,196 1163,226 1203,226
  1222,212 1241,246 1260,268 1282,268 1300,296 1321,296 1339,260 1358,278 1379,290 1418,278 1438,292 1457,245 1477,269 1496,259 1517,259 1536,274 1552,259`),
  section(560, 680, 2.8)(`0,242 8,236 27,265 47,284 66,257 85,265 106,241 124,268 145,266 163,283 184,269 203,268 223,256 242,265 262,254 281,226 301,207
  345,181 362,190 380,175 403,175 421,200 440,164 461,211 480,206 510,206 519,202 540,223 560,217 580,220 600,211 636,169 656,166 676,209 696,194
  715,208 736,208 754,181 775,224 795,235 813,238 835,257 854,265 874,266 892,277 911,256 932,244 951,265 970,236 990,233 1010,230 1030,259 1050,216
  1070,190 1088,209 1107,184 1135,184 1148,181 1166,142 1187,152 1205,147 1235,130 1265,124 1285,130 1325,118 1344,187 1365,226 1384,220 1405,239
  1424,257 1443,246 1463,257 1483,233 1502,259`),
  section(1100, 660, 2.8)(`10,301 30,335 50,346 69,335 89,352 108,259 119,265 130,277`));
for (const [cls, x, t] of [['gray', 1304, 'RSI=49,3637'], ['hi', 1371, 'HI Base=70,0000'], ['ema20', 1459, 'LO Base=30,0000'], ['gray', 1551, '14,70,30']]) label(cls, x, 713, t);
[721, 736, 751, 766, 782].forEach((y, i) => label('', 1607, y + 4, (70 - 10 * i) + ',0000'));
```
